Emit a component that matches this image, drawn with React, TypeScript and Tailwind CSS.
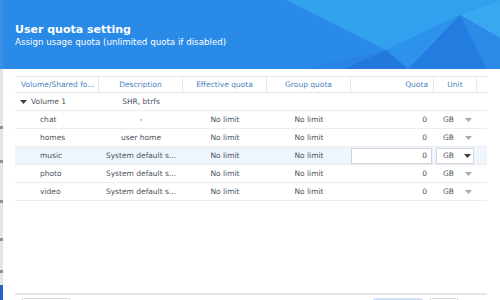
import React from "react";

const cols = "grid grid-cols-[84px_84px_84px_84px_83px_43px_10px]";

const rows = [
  { name: "chat", desc: "-" },
  { name: "homes", desc: "user home" },
  { name: "music", desc: "System default s...", active: true },
  { name: "photo", desc: "System default s..." },
  { name: "video", desc: "System default s..." },
];

function Caret({ dark }: { dark?: boolean }) {
  return (
    <svg width="7" height="4" viewBox="0 0 7 4">
      <polygon points="0,0 7,0 3.5,4" fill={dark ? "#3a3f45" : "#a3abb3"} />
    </svg>
  );
}

function HeaderArt() {
  return (
    <svg className="absolute inset-0 h-full w-full" viewBox="0 0 497 69" preserveAspectRatio="none">
      <rect width="497" height="69" fill="#2a8ae7" />
      <polygon points="283,0 383,50 457,15 497,0" fill="#32a0ee" />
      <polygon points="457,15 497,0 497,38" fill="#3aa8f1" />
      <polygon points="457,15 497,38 497,69 484,69" fill="#2b8be7" />
      <polygon points="457,15 484,69 405,69" fill="#237de0" />
      <polygon points="383,50 457,15 405,69" fill="#2d92ea" />
      <polygon points="383,50 405,69 340,69" fill="#2278dc" />
      <polygon points="300,69 383,50 340,69" fill="#2885e5" />
    </svg>
  );
}

export default function App() {
  return (
    <div
      className="flex h-[300px] w-[500px] overflow-hidden bg-white text-[#4b545d]"
      style={{ fontFamily: '"DejaVu Sans", Verdana, sans-serif' }}
    >
      {/* page behind the dialog */}
      <div className="flex w-[3px] flex-col bg-[#e3e5e8]">
        <div className="h-[69px] bg-[#3d8fe4]" />
        <div className="mt-[57px] h-[3px] bg-[#8d939a]" />
        <div className="mt-[31px] h-[3px] bg-[#8d939a]" />
        <div className="mt-[37px] h-[3px] bg-[#8d939a]" />
        <div className="mt-[35px] h-[3px] bg-[#8d939a]" />
        <div className="mt-[29px] h-[3px] bg-[#8d939a]" />
        <div className="mt-auto h-[15px] bg-[#2463c6]" />
      </div>

      <div className="flex flex-1 flex-col">
        <div className="relative h-[69px] shrink-0">
          <HeaderArt />
          <div className="relative flex flex-col pl-[12px] pt-[23px] text-white">
            <div className="text-[11px] font-bold leading-[13px]">User quota setting</div>
            <div className="mt-[1px] text-[8.7px] leading-[11px]">
              Assign usage quota (unlimited quota if disabled)
            </div>
          </div>
        </div>

        <div className="ml-[12px] mt-[7px] w-[472px] text-[7.5px]">
          <div className={`${cols} h-[17px] border-y border-[#dfe6ee] leading-[15px] text-[#4a7fc0]`}>
            <div className="border-r border-[#e4e9ef] pl-[6px]">Volume/Shared fo...</div>
            <div className="border-r border-[#e4e9ef] text-center">Description</div>
            <div className="border-r border-[#e4e9ef] text-center">Effective quota</div>
            <div className="border-r border-[#e4e9ef] text-center">Group quota</div>
            <div className="border-r border-[#e4e9ef] pr-[5px] text-right">Quota</div>
            <div className="border-r border-[#e4e9ef] text-center">Unit</div>
            <div />
          </div>

          <div className={`${cols} h-[18px] items-center border-b border-[#ececec]`}>
            <div className="flex items-center pl-[5px]">
              <Caret dark />
              <span className="ml-[4px]">Volume 1</span>
            </div>
            <div className="text-center">SHR, btrfs</div>
          </div>

          {rows.map((r) => (
            <div
              key={r.name}
              className={`${cols} h-[18px] items-center border-b border-[#ececec] ${r.active ? "bg-[#eef5fc]" : ""}`}
            >
              <div className="pl-[25px]">{r.name}</div>
              <div className="text-center">{r.desc}</div>
              <div className="text-center">No limit</div>
              <div className="text-center">No limit</div>
              {r.active ? (
                <div className="mr-[2px] h-[16px] border border-[#cfd6de] bg-white pr-[4px] text-right leading-[14px]">0</div>
              ) : (
                <div className="pr-[7px] text-right">0</div>
              )}
              {r.active ? (
                <div className="ml-[2px] mr-[3px] flex h-[16px] items-center justify-between border border-[#cfd6de] bg-white pl-[6px] pr-[2px]">
                  <span>GB</span>
                  <Caret dark />
                </div>
              ) : (
                <div className="flex items-center justify-between pl-[9px] pr-[5px]">
                  <span>GB</span>
                  <Caret />
                </div>
              )}
              <div />
            </div>
          ))}
        </div>

        <div className="mt-auto ml-[12px] w-[472px] border-t-2 border-[#e3e6e9]" />
        <div className="ml-[19px] mt-[3px] flex h-[2px] w-[436px]">
          <div className="w-[48px] rounded-t-[3px] border border-b-0 border-[#d5d9de]" />
          <div className="ml-auto w-[50px] rounded-t-[3px] bg-[#cfe2f7]" />
          <div className="ml-[7px] w-[28px] rounded-t-[3px] border border-b-0 border-[#d5d9de]" />
        </div>
      </div>
    </div>
  );
}
